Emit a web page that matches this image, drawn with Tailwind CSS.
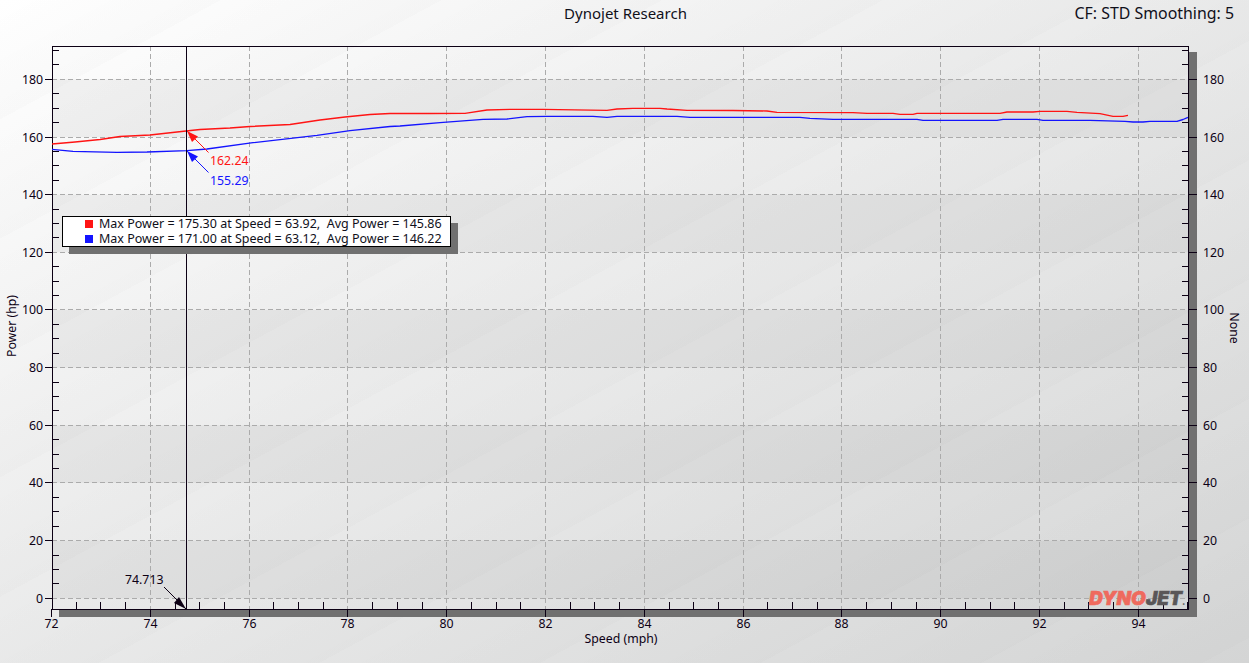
<!DOCTYPE html>
<html lang="en">
<head>
<meta charset="UTF-8">
<title>Dynojet Research</title>
<script src="https://cdn.jsdelivr.net/npm/@tailwindcss/browser@4"></script>
</head>
<body class="w-[1249px] h-[663px] overflow-hidden bg-[image:repeating-linear-gradient(151.6deg,rgba(0,0,0,0)_0,rgba(0,0,0,0.01)_105px),linear-gradient(to_bottom_right,#ffffff,#d4d5d5)] font-['Noto_Sans',sans-serif] text-[#10101a]">
  <!-- title row -->
  <header class="grid grid-cols-[1fr_auto_1fr] h-[30px] pt-[3px] pr-[15px] text-[15px] leading-[20px]">
    <div></div>
    <div class="pl-[17px]">Dynojet Research</div>
    <div class="text-right text-[15.9px]">CF: STD Smoothing: 5</div>
  </header>

  <div class="relative w-[1249px] h-[633px]">
    <svg id="chart" width="1249" height="633" viewBox="0 30 1249 633" class="block text-[12.3px]"></svg>

    <!-- legend -->
    <div class="absolute left-[62px] top-[186px] w-[389px] h-[31px] bg-white border border-black shadow-[7px_7px_0_#707070] pl-[22px] text-[12.5px] leading-[14.6px]">
      <div class="flex items-center whitespace-pre"><span class="w-[8px] h-[8px] bg-[#ff1414] mr-[6px]"></span>Max Power = 175.30 at Speed = 63.92,  Avg Power = 145.86</div>
      <div class="flex items-center whitespace-pre"><span class="w-[8px] h-[8px] bg-[#1414ff] mr-[6px]"></span>Max Power = 171.00 at Speed = 63.12,  Avg Power = 146.22</div>
    </div>

    <!-- logo -->
    <div class="absolute left-[1089px] top-[559px] flex items-baseline font-['Inter',sans-serif] font-black italic text-[19px] leading-[20px]">
      <span class="text-[#ef6a5e] [-webkit-text-stroke:0.6px_#ef6a5e]">DYNO</span><span class="text-[#5a5658] [-webkit-text-stroke:0.6px_#5a5658]">JET</span><span class="text-[#5a5658] text-[9px] not-italic">.</span>
    </div>
  </div>

  <script>
    const svg = document.getElementById('chart');
    const NS = 'http://www.w3.org/2000/svg';
    const L = 52, R = 1188, T = 46, B = 609;
    const INK = '#0c0014';
    const xAt = v => 51.5 + (v - 72) * 49.4;
    const yAt = v => 598.3 - v * 2.883;

    function add(tag, attrs, text) {
      const el = document.createElementNS(NS, tag);
      for (const k in attrs) el.setAttribute(k, attrs[k]);
      if (text) el.textContent = text;
      svg.appendChild(el);
      return el;
    }
    const crisp = v => Math.floor(v) + 0.5;
    const line = (x1, y1, x2, y2, extra) => add('line', { x1, y1, x2, y2, stroke: INK, ...extra });

    // shadow of the plot
    add('rect', { x: R + 1, y: 52, width: 8, height: 565, fill: '#707070' });
    add('rect', { x: 59, y: B + 1, width: R - 58, height: 7, fill: '#707070' });

    // darker bands
    for (let v = 0; v < 180; v += 40) {
      add('rect', { x: L, y: yAt(v + 20), width: R - L, height: yAt(v) - yAt(v + 20), fill: '#000', 'fill-opacity': 0.045 });
    }

    // grid
    const dash = { stroke: '#ababab', 'stroke-dasharray': '5 3' };
    for (let v = 0; v <= 180; v += 20) line(L, crisp(yAt(v)), R, crisp(yAt(v)), dash);
    for (let v = 74; v <= 94; v += 2) line(crisp(xAt(v)), T, crisp(xAt(v)), B, dash);

    // y ticks and labels
    for (let v = 0; v <= 190; v += 5) {
      const y = crisp(yAt(v));
      if (v % 20 === 0) {
        line(45, y, L, y);
        line(R, y, 1197, y);
        add('text', { x: 43, y: y + 4.5, 'text-anchor': 'end', fill: INK }, String(v));
        add('text', { x: 1203, y: y + 4.5, fill: INK }, String(v));
      } else {
        line(L, y, 59, y);
        line(R - 6, y, R, y);
      }
    }

    // x ticks and labels
    for (let v = 72; v <= 95; v += 0.5) {
      const x = crisp(xAt(v));
      if (v % 2 === 0) {
        line(x, B, x, 617);
        add('text', { x, y: 628, 'text-anchor': 'middle', fill: INK }, String(v));
      } else {
        line(x, B - 7, x, B);
      }
    }

    // frame
    add('rect', { x: L + 0.5, y: T + 0.5, width: R - L, height: B - T, fill: 'none', stroke: INK });

    // axis titles
    add('text', { x: 621, y: 643, 'text-anchor': 'middle', fill: INK }, 'Speed (mph)');
    add('text', { transform: 'translate(16 326) rotate(-90)', 'text-anchor': 'middle', fill: INK }, 'Power (hp)');
    add('text', { transform: 'translate(1230 328) rotate(90)', 'text-anchor': 'middle', fill: INK }, 'None');

    // traces
    const red = [[52,144],[75,142],[100,139.5],[120,136.5],[150,135],[186,131],[200,129.5],[230,128],[250,126.5],[290,124.5],[320,120],[345,117],[370,114.5],[390,113.5],[430,113.5],[465,113.3],[487,110],[510,109.3],[543,109.3],[607,110.3],[617,109],[633,108.3],[660,108.3],[667,109],[687,110.3],[733,110.5],[767,111],[777,112.3],[853,112.7],[867,113.3],[893,113.3],[900,114.3],[913,114.3],[917,113.3],[1000,113.3],[1007,112],[1033,112],[1040,111.3],[1067,111.3],[1077,112.3],[1100,113.7],[1113,116.3],[1123,116.3],[1128,115.3]];
    const blue = [[52,149.3],[73,151.3],[117,152.3],[147,152],[187,150.7],[207,149],[253,142.7],[317,135.3],[350,130.7],[390,126.5],[400,126],[440,122.7],[483,119.3],[507,119],[527,116.7],[547,116.3],[593,116.3],[607,117.3],[617,116.3],[677,116.3],[690,117.3],[800,117.3],[810,118.3],[833,119.3],[917,119.3],[923,120.3],[997,120.3],[1003,119.3],[1037,119.3],[1043,120.3],[1090,120.3],[1125,121.3],[1133,122],[1143,122],[1150,121.3],[1177,121.3],[1183,119.5],[1188,117.3]];
    const trace = (pts, stroke) => add('polyline', { points: pts.map(p => p.join(',')).join(' '), fill: 'none', stroke, 'stroke-width': 1.35, 'stroke-linejoin': 'round' });
    trace(red, '#ff1414');
    trace(blue, '#1414ff');

    // cursor
    line(186.5, T, 186.5, B);

    // callouts
    function callout(x1, y1, x2, y2, c1, c2, fill, label, lx, ly) {
      line(x1, y1, x2, y2, { stroke: fill });
      add('polygon', { points: `${x2},${y2} ${c1} ${c2}`, fill });
      add('text', { x: lx, y: ly, fill }, label);
    }
    callout(208.5, 152.5, 187, 131, '198,136.5', '192,142', '#ff1414', '162.24', 210, 164.5);
    callout(208.5, 172.5, 187, 151, '198,156.5', '192,162', '#1414ff', '155.29', 210, 184.5);
    callout(164, 587, 186, 609, '179,597', '174,603', INK, '74.713', 125, 583.5);
  </script>
</body>
</html>
